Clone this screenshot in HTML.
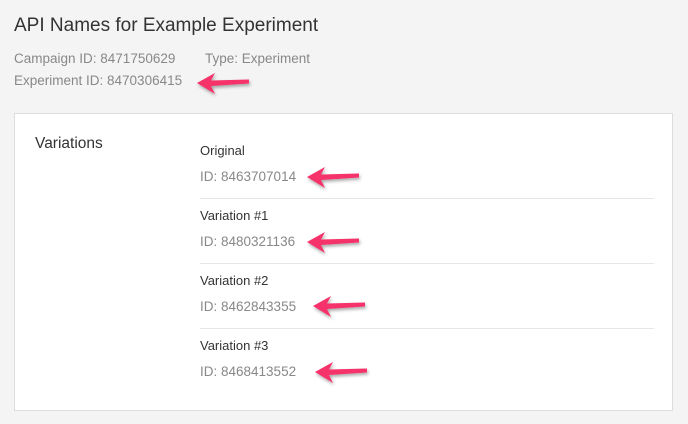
<!DOCTYPE html>
<html><head><style>
body{margin:0;width:688px;height:424px;background:#f4f4f4;font-family:"Liberation Sans",sans-serif;position:relative;overflow:hidden}
.a{position:absolute;white-space:nowrap}
h1{position:absolute;left:14px;top:15px;margin:0;font-weight:normal;font-size:19px;color:#333}
.g{color:#888;font-size:13.5px}
.card{position:absolute;left:14px;top:113px;width:659px;height:298px;background:#fff;border:1px solid #ddd;box-sizing:border-box}
.n{font-size:13px;color:#333}
.sep{position:absolute;left:200px;width:454px;height:1px;background:#e6e6e6}
svg{position:absolute}
</style></head><body>
<h1>API Names for Example Experiment</h1>
<div class="a g" style="left:14px;top:51px">Campaign ID: 8471750629</div>
<div class="a g" style="left:205px;top:51px">Type: Experiment</div>
<div class="a g" style="left:14px;top:73px">Experiment ID: 8470306415</div>
<div class="card"></div>
<div class="a" style="left:35px;top:135px;font-size:15.5px;color:#333">Variations</div>
<div class="a n" style="left:200px;top:143px">Original</div>
<div class="a g" style="left:200px;top:169px">ID: 8463707014</div>
<div class="sep" style="top:198px"></div>
<div class="a n" style="left:200px;top:208px">Variation #1</div>
<div class="a g" style="left:200px;top:234px">ID: 8480321136</div>
<div class="sep" style="top:263px"></div>
<div class="a n" style="left:200px;top:273px">Variation #2</div>
<div class="a g" style="left:200px;top:299px">ID: 8462843355</div>
<div class="sep" style="top:328px"></div>
<div class="a n" style="left:200px;top:338px">Variation #3</div>
<div class="a g" style="left:200px;top:364px">ID: 8468413552</div>
<svg width="688" height="424" style="left:0;top:0">
<defs><filter id="s" x="-20%" y="-50%" width="140%" height="200%"><feDropShadow dx="1" dy="2" stdDeviation="1.5" flood-opacity="0.35"/></filter>
<path id="ar" d="M0 0 L18 -10 L14 -2.5 L52 -3.5 L52 0.5 L14 3 L18 11 Z" fill="#f5306b"/></defs>
<g filter="url(#s)">
<use href="#ar" x="197" y="83"/>
<use href="#ar" x="307" y="177"/>
<use href="#ar" x="307" y="242"/>
<use href="#ar" x="313" y="306"/>
<use href="#ar" x="315" y="372"/>
</g></svg>
</body></html>
